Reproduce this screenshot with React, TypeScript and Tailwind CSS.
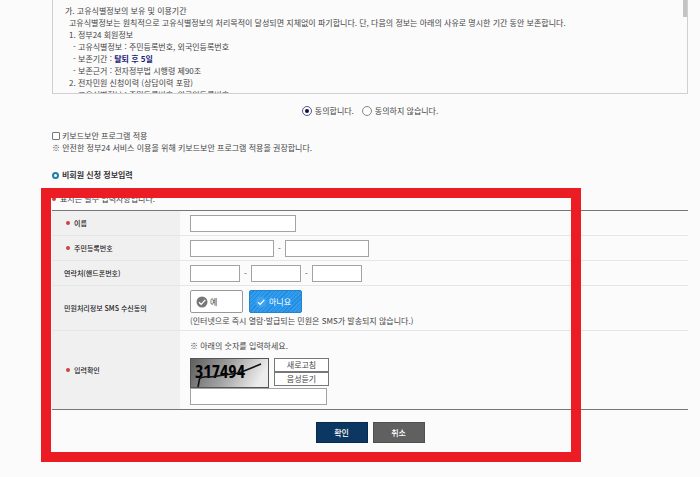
import React, { useState } from "react";
import clsx from "clsx";

const TERMS = [
  { text: "가. 고유식별정보의 보유 및 이용기간", indent: "pl-0" },
  {
    text: "고유식별정보는 원칙적으로 고유식별정보의 처리목적이 달성되면 지체없이 파기합니다. 단, 다음의 정보는 아래의 사유로 명시한 기간 동안 보존합니다.",
    indent: "pl-1",
  },
  { text: "1. 정부24 회원정보", indent: "pl-1" },
  { text: "- 고유식별정보 : 주민등록번호, 외국인등록번호", indent: "pl-2" },
  { text: "- 보존기간 : ", strong: "탈퇴 후 5일", indent: "pl-2" },
  { text: "- 보존근거 : 전자정부법 시행령 제90조", indent: "pl-2" },
  { text: "2. 전자민원 신청이력 (상담이력 포함)", indent: "pl-1" },
  { text: "- 고유식별정보 : 주민등록번호, 외국인등록번호", indent: "pl-2" },
];

const inputClass = "block h-[17px] border border-[#a3a3a3] bg-white px-1 outline-none";

interface RowProps {
  label: string;
  htmlFor?: string;
  required?: boolean;
  className?: string;
  children: React.ReactNode;
}

function Row({ label, htmlFor, required, className, children }: RowProps) {
  return (
    <tr className="border-b border-[#e6e6e6] last:border-[#777]">
      <th
        scope="row"
        className="w-32 bg-[#f0f0f0] pl-3 text-left align-middle text-[7px] font-medium text-[#222]"
      >
        <label htmlFor={htmlFor} className="flex items-center gap-1">
          {required && <span className="ml-0.5 size-1 rounded-full bg-[#c94440]" />}
          {label}
        </label>
      </th>
      <td className={clsx("pl-[10px] align-middle", className)}>{children}</td>
    </tr>
  );
}

function Dash() {
  return <span className="w-[11px] text-center">-</span>;
}

function CheckIcon({ selected }: { selected: boolean }) {
  return (
    <svg viewBox="0 0 12 12" className="size-3" aria-hidden="true">
      <circle cx="6" cy="6" r="5.5" fill={selected ? "#3ea2ef" : "#777"} />
      <path d="M3 6.2 5.2 8.4 9.3 3.9" fill="none" stroke="#fff" strokeWidth="1.3" />
    </svg>
  );
}

function Captcha() {
  return (
    <svg viewBox="0 0 79 30" className="h-[30px] w-[79px]" role="img" aria-label="자동입력 방지 숫자">
      <defs>
        <linearGradient id="captcha-bg" x1="0" y1="0" x2="1" y2="0.2">
          <stop offset="0" stopColor="#5d5d5d" />
          <stop offset="0.55" stopColor="#a5a5a5" />
          <stop offset="1" stopColor="#ededed" />
        </linearGradient>
      </defs>
      <rect x="0.5" y="0.5" width="78" height="29" fill="url(#captcha-bg)" stroke="#555" />
      <text
        x="5"
        y="20"
        fontSize="18"
        fontWeight="700"
        fontFamily="'Open Sans Condensed', 'Noto Sans Condensed', 'Roboto Condensed', 'Liberation Sans Narrow', sans-serif"
      >
        317494
      </text>
      <path d="M8 29 9.5 21 Q12 18 20 19 L49 15 71 6" fill="none" stroke="#111" strokeWidth="1.6" />
    </svg>
  );
}

export default function App() {
  const [agree, setAgree] = useState("yes");
  const [sms, setSms] = useState("no");

  return (
    <main
      lang="ko"
      className="relative min-h-screen bg-[#fbfbfb] pr-3 pl-[52px] font-['Noto_Sans_CJK_KR',sans-serif] text-[8px] leading-3 text-[#444]"
    >
      {/* Terms */}
      <section className="flex h-[94px] justify-between overflow-hidden border border-t-0 border-[#d0d0d0] pt-[5px] pl-3">
        <div>
          {TERMS.map((line, i) => (
            <p key={i} className={clsx("whitespace-nowrap", line.indent)}>
              {line.text}
              {line.strong && <strong className="text-[#1c1c78]">{line.strong}</strong>}
            </p>
          ))}
        </div>
        <div className="-mt-[5px] h-[22px] w-1 bg-[#c4c4c4] bg-clip-content pb-[5px]" />
      </section>

      <div className="mt-[11px] flex justify-center gap-2">
        {[
          { value: "yes", label: "동의합니다." },
          { value: "no", label: "동의하지 않습니다." },
        ].map((item) => (
          <label key={item.value} className="flex items-center gap-[3px]">
            <input
              type="radio"
              name="agree"
              value={item.value}
              checked={agree === item.value}
              onChange={() => setAgree(item.value)}
              className="size-[10px] appearance-none rounded-full border border-[#888] bg-white bg-clip-content p-0.5 checked:border-[#55559a] checked:bg-[#111133]"
            />
            {item.label}
          </label>
        ))}
      </div>

      <div className="mt-[13px]">
        <label className="flex items-center gap-0.5">
          <input
            type="checkbox"
            className="size-2 appearance-none rounded-[1px] border border-[#777] bg-white checked:bg-[#2996e6]"
          />
          키보드보안 프로그램 적용
        </label>
        <p>※ 안전한 정부24 서비스 이용을 위해 키보드보안 프로그램 적용을 권장합니다.</p>
      </div>

      {/* Applicant form */}
      <h2 className="mt-[13px] flex items-center gap-[3px] text-[8px] leading-4 font-bold text-[#333]">
        <span className="size-[7px] rounded-full border-2 border-[#207fa6]" />
        비회원 신청 정보입력
      </h2>
      <p className="mt-[10px] flex items-center gap-1">
        <span className="size-1 rounded-full bg-[#c94440]" />
        표시는 필수 입력사항입니다.
      </p>

      <form className="mt-[5px]" onSubmit={(e) => e.preventDefault()}>
        <table className="w-full border-collapse border-t border-[#777]">
          <tbody>
            <Row label="이름" htmlFor="name" required className="pt-1 pb-[3px]">
              <input id="name" type="text" className={clsx(inputClass, "w-[106px]")} />
            </Row>
            <Row label="주민등록번호" htmlFor="rrn1" required className="pt-1 pb-[3px]">
              <div className="flex items-center">
                <input id="rrn1" type="text" className={clsx(inputClass, "w-[84px]")} />
                <Dash />
                <input type="password" aria-label="주민등록번호 뒷자리" className={clsx(inputClass, "w-[84px]")} />
              </div>
            </Row>
            <Row label="연락처(핸드폰번호)" htmlFor="tel1" className="pt-1 pb-[3px]">
              <div className="flex items-center">
                <input id="tel1" type="text" className={clsx(inputClass, "w-[50px]")} />
                <Dash />
                <input type="text" aria-label="연락처 가운데 자리" className={clsx(inputClass, "w-[50px]")} />
                <Dash />
                <input type="text" aria-label="연락처 끝자리" className={clsx(inputClass, "w-[50px]")} />
              </div>
            </Row>
            <Row label="민원처리정보 SMS 수신동의" className="pt-1 pb-[3px]">
              <div className="flex gap-1.5">
                {[
                  { value: "yes", label: "예" },
                  { value: "no", label: "아니요" },
                ].map((item) => (
                  <button
                    key={item.value}
                    type="button"
                    aria-pressed={sms === item.value}
                    onClick={() => setSms(item.value)}
                    className={clsx(
                      "flex h-[23px] w-[53px] items-center gap-0.5 rounded-[2px] border pl-[5px]",
                      sms === item.value
                        ? "border-[#2583c9] bg-[repeating-linear-gradient(135deg,#2f9cf0_0_2px,#2389d8_2px_3px)] text-white"
                        : "border-[#999] bg-white"
                    )}
                  >
                    <CheckIcon selected={sms === item.value} />
                    {item.label}
                  </button>
                ))}
              </div>
              <p className="mt-0.5">(인터넷으로 즉시 열람·발급되는 민원은 SMS가 발송되지 않습니다.)</p>
            </Row>
            <Row label="입력확인" htmlFor="captcha" required className="pt-[9px] pb-1">
              <p>※ 아래의 숫자를 입력하세요.</p>
              <div className="mt-1.5 flex gap-[5px]">
                <Captcha />
                <div className="flex flex-col">
                  {["새로고침", "음성듣기"].map((label) => (
                    <button key={label} type="button" className="h-[14px] w-[55px] border border-[#777] bg-white">
                      {label}
                    </button>
                  ))}
                </div>
              </div>
              <input id="captcha" type="text" className={clsx(inputClass, "w-[137px]")} />
            </Row>
          </tbody>
        </table>

        <div className="mt-3 flex justify-center gap-[5px] font-medium text-white">
          <button type="submit" className="h-[21px] w-[52px] border border-[#082b4d] bg-[#0b3762]">
            확인
          </button>
          <button type="button" className="h-[21px] w-[52px] border border-[#505050] bg-[#606060]">
            취소
          </button>
        </div>
      </form>

      {/* Highlight over the form */}
      <div className="pointer-events-none absolute top-[188px] left-[41px] h-[274px] w-[540px] border-[10px] border-[#ec1c24]" />
    </main>
  );
}
